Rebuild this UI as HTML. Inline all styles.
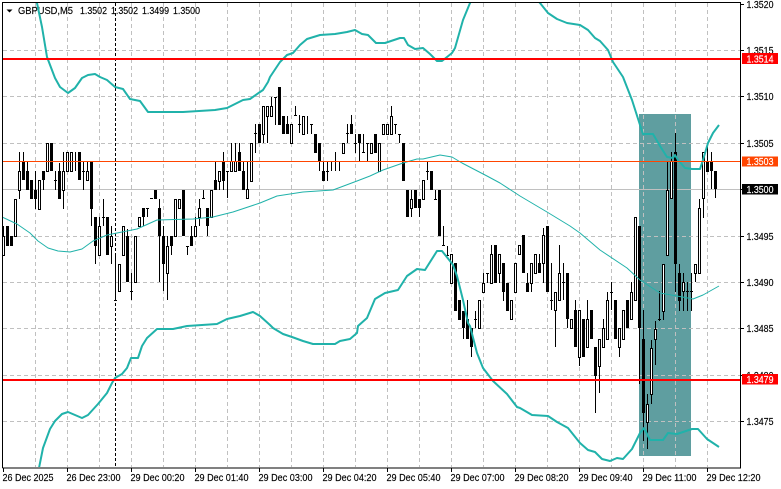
<!DOCTYPE html>
<html><head><meta charset="utf-8"><style>
html,body{margin:0;padding:0;background:#fff;width:781px;height:489px;overflow:hidden}
svg{display:block}
text{font-family:"Liberation Sans",sans-serif;font-size:10.5px;fill:#000;stroke:#000;stroke-width:.15px}
</style></head><body>
<svg width="781" height="489" viewBox="0 0 781 489" xmlns="http://www.w3.org/2000/svg">
<defs><clipPath id="c"><rect x="3" y="3" width="737" height="464"/></clipPath></defs>
<rect width="781" height="489" fill="#fff"/>
<rect x="639" y="114" width="52" height="342" fill="#5f9ea0"/>
<g stroke="#c0c0c0" stroke-width="1" stroke-dasharray="4 3" fill="none">
<path d="M3 50.5H740M3 96.5H740M3 143.5H740M3 236.5H740M3 282.5H740M3 328.5H740M3 375.5H740M3 421.5H740"/>
<path d="M35.5 3V467M67.5 3V467M99.5 3V467M131.5 3V467M163.5 3V467M195.5 3V467M227.5 3V467M259.5 3V467M291.5 3V467M323.5 3V467M355.5 3V467M387.5 3V467M419.5 3V467M451.5 3V467M483.5 3V467M515.5 3V467M547.5 3V467M579.5 3V467M611.5 3V467M643.5 3V467M675.5 3V467M707.5 3V467"/>
</g>
<path d="M3 189.5H740" stroke="#c0c0c0" stroke-width="1"/>
<path d="M6.5 9.5h6l-3 3z" fill="#000"/>
<text x="18" y="14" textLength="55" lengthAdjust="spacingAndGlyphs">GBPUSD,M5</text>
<text x="80" y="14" textLength="27" lengthAdjust="spacingAndGlyphs">1.3502</text>
<text x="111" y="14" textLength="27" lengthAdjust="spacingAndGlyphs">1.3502</text>
<text x="142" y="14" textLength="27" lengthAdjust="spacingAndGlyphs">1.3499</text>
<text x="173" y="14" textLength="27" lengthAdjust="spacingAndGlyphs">1.3500</text>
<!-- wicks -->
<path fill="none" stroke="#000" stroke-width="1" d="M3.5 226V255M7.5 226V246M19.5 152V199M23.5 152V180M27.5 161V190M35.5 171V209M43.5 171V190M55.5 171V190M54 180.5h3M59.5 163V199M63.5 152V209M75.5 152V171M74 161.5h3M83.5 161V190M82 171.5h3M87.5 161V180M91.5 161V226M95.5 217V264M99.5 217V255M103.5 199V226M102 217.5h3M111.5 226V264M115.5 253V300M114 300.5h3M127.5 229V282M131.5 273V300M130 291.5h3M143.5 208V226M147.5 208V217M146 208.5h3M150 198.5h3M159.5 199V282M163.5 226V291M167.5 236V300M171.5 236V255M187.5 246V255M186 246.5h3M191.5 226V246M195.5 217V236M199.5 199V226M203.5 190V198M202 198.5h3M207.5 208V236M215.5 161V190M219.5 171V190M223.5 152V190M227.5 171V198M226 171.5h3M231.5 143V171M235.5 143V171M239.5 143V171M243.5 161V190M247.5 161V198M255.5 124V153M254 133.5h3M259.5 124V143M263.5 106V143M267.5 106V143M271.5 97V116M275.5 97V125M274 97.5h3M283.5 116V134M287.5 116V134M295.5 106V115M294 115.5h3M298 124.5h3M299.5 115V133M307.5 116V134M311.5 124V134M310 124.5h3M319.5 143V171M323.5 161V181M327.5 161V181M326 171.5h3M331.5 161V171M330 161.5h3M335.5 152V171M334 161.5h3M339.5 161V171M338 161.5h3M347.5 124V143M346 133.5h3M351.5 115V134M355.5 134V153M354 143.5h3M359.5 134V161M363.5 134V152M362 152.5h3M367.5 143V161M366 143.5h3M391.5 106V134M395.5 124V134M394 124.5h3M399.5 134V143M398 134.5h3M411.5 190V217M419.5 199V217M427.5 161V180M426 171.5h3M435.5 190V199M434 199.5h3M443.5 226V245M442 245.5h3M447.5 246V255M446 255.5h3M463.5 311V339M467.5 300V339M471.5 328V357M475.5 311V328M474 319.5h3M483.5 273V292M487.5 273V283M486 273.5h3M491.5 245V283M499.5 254V283M503.5 263V301M527.5 273V292M531.5 263V292M539.5 254V273M543.5 228V283M551.5 263V310M550 300.5h3M555.5 292V347M559.5 245V300M563.5 263V300M562 282.5h3M567.5 273V328M575.5 300V347M579.5 310V366M587.5 300V347M595.5 347V413M599.5 339V393M603.5 319V347M607.5 292V339M611.5 282V310M610 292.5h3M619.5 328V357M631.5 282V319M639.5 226V384M643.5 310V441M647.5 394V449M651.5 340V404M655.5 321V365M659.5 291V321M658 319.5h3M663.5 264V320M667.5 161V255M671.5 152V198M675.5 133V292M679.5 264V311M683.5 273V311M687.5 282V311M686 291.5h3M691.5 273V311M690 291.5h3M695.5 264V282M699.5 199V273M703.5 152V218M707.5 143V172M711.5 152V189M715.5 171V198"/>
<!-- black bodies -->
<path fill="none" stroke="#000" stroke-width="3" d="M7.5 226V246M11.5 236V246M23.5 161V180M27.5 171V190M31.5 180V199M35.5 190V199M43.5 171V180M51.5 143V171M59.5 171V199M79.5 152V180M91.5 161V209M95.5 217V246M107.5 217V255M127.5 236V282M143.5 208V217M155.5 190V199M159.5 208V236M163.5 236V264M171.5 236V246M183.5 190V236M191.5 236V246M207.5 208V226M215.5 180V190M223.5 161V181M239.5 152V171M243.5 171V190M259.5 124V143M279.5 87V125M283.5 116V134M287.5 124V134M315.5 134V153M319.5 143V161M323.5 171V181M351.5 124V134M359.5 134V143M375.5 134V153M403.5 143V181M407.5 190V217M415.5 190V208M419.5 199V208M431.5 171V190M439.5 190V236M455.5 263V311M459.5 300V320M463.5 311V328M467.5 319V339M471.5 328V347M495.5 245V283M503.5 263V292M507.5 283V311M523.5 235V273M527.5 283V292M539.5 263V273M547.5 226V292M567.5 273V319M575.5 310V347M583.5 319V357M591.5 310V339M595.5 347V376M615.5 300V339M627.5 300V328M639.5 226V328M643.5 339V413M675.5 152V264M679.5 273V301M707.5 161V172M711.5 161V171M715.5 171V189"/>
<!-- white bodies -->
<path fill="#fff" stroke="#000" stroke-width="1" d="M2.5 236.5h2v19h-2zM14.5 199.5h2v37h-2zM18.5 171.5h2v19h-2zM38.5 180.5h2v29h-2zM46.5 143.5h2v28h-2zM62.5 171.5h2v19h-2zM66.5 152.5h2v19h-2zM70.5 152.5h2v19h-2zM86.5 171.5h2v9h-2zM98.5 226.5h2v29h-2zM110.5 236.5h2v10h-2zM118.5 264.5h2v27h-2zM122.5 226.5h2v29h-2zM134.5 236.5h2v46h-2zM138.5 217.5h2v9h-2zM166.5 246.5h2v27h-2zM174.5 199.5h2v37h-2zM178.5 199.5h2v9h-2zM194.5 226.5h2v10h-2zM198.5 208.5h2v9h-2zM210.5 190.5h2v27h-2zM218.5 171.5h2v10h-2zM230.5 161.5h2v10h-2zM234.5 161.5h2v10h-2zM246.5 189.5h2v9h-2zM250.5 143.5h2v38h-2zM262.5 106.5h2v28h-2zM266.5 106.5h2v10h-2zM270.5 106.5h2v10h-2zM290.5 124.5h2v19h-2zM302.5 116.5h2v18h-2zM342.5 143.5h2v10h-2zM370.5 143.5h2v10h-2zM378.5 143.5h2v28h-2zM382.5 124.5h2v10h-2zM386.5 124.5h2v10h-2zM390.5 116.5h2v18h-2zM410.5 199.5h2v9h-2zM422.5 180.5h2v19h-2zM450.5 254.5h2v29h-2zM478.5 300.5h2v28h-2zM482.5 283.5h2v9h-2zM490.5 254.5h2v29h-2zM498.5 254.5h2v19h-2zM510.5 300.5h2v19h-2zM514.5 263.5h2v29h-2zM518.5 245.5h2v9h-2zM530.5 263.5h2v20h-2zM534.5 254.5h2v19h-2zM542.5 235.5h2v28h-2zM554.5 292.5h2v18h-2zM558.5 273.5h2v27h-2zM570.5 319.5h2v9h-2zM578.5 310.5h2v47h-2zM586.5 319.5h2v28h-2zM598.5 339.5h2v27h-2zM602.5 328.5h2v19h-2zM606.5 300.5h2v39h-2zM618.5 328.5h2v19h-2zM622.5 310.5h2v29h-2zM630.5 292.5h2v27h-2zM634.5 217.5h2v83h-2zM646.5 404.5h2v18h-2zM650.5 348.5h2v46h-2zM654.5 329.5h2v10h-2zM662.5 264.5h2v47h-2zM666.5 190.5h2v65h-2zM670.5 161.5h2v37h-2zM682.5 282.5h2v9h-2zM694.5 264.5h2v9h-2zM698.5 208.5h2v65h-2zM702.5 152.5h2v46h-2z"/>
<path d="M115.5 3V468" stroke="#000" stroke-width="1" stroke-dasharray="3 2" fill="none"/>
<!-- bands -->
<g clip-path="url(#c)" fill="none" stroke="#20b2aa" stroke-linejoin="round">
<path stroke-width="2" d="M36 0L37 3 42 27 47 57 55 78 60 87 68 93 75 88 82 78 88 75 95 74 100 77 107 80 115 87 123 89 130 99 140 101 148 112 183 112 215 110 227 108 243 100 250 99 260 92 263 90 268 82 270 77 280 62 287 55 293 53 300 45 307 39 320 35 335 34 347 32 355 30 362 34 368 35 376 43 385 43 400 38 404 38 408 45 415 49 423 48 430 54 437 61 442 61 452 53 455 48 463 20 470 3 472 0"/>
<path stroke-width="2" d="M537 0L540 3 548 13 557 19 567 23 580 25 588 30 595 38 600 41 608 50 613 62 623 77 632 100 640 125 643 134 653 134 660 146 667 157 673 158 675 155 678 160 685 168 692 169 700 169 703 160 708 143 713 133 719 125"/>
<path stroke-width="1" d="M0 216L17 224 30 233 38 241 48 248 58 251 70 252 82 249 93 241 107 235 127 231 137 229 157 220 193 219 213 217 233 212 260 203 277 196 303 192 333 190 357 181 370 176 383 170 403 163 417 159 423 159 440 155 452 157 462 163 487 176 500 183 520 196 547 212 570 226 580 233 600 250 627 268 640 280 660 293 677 296 693 299 703 295 719 286"/>
<path stroke-width="2" d="M39 468L43 448 50 429 55 421 62 414 68 412 75 415 82 418 88 415 98 404 107 393 112 383 115 378 122 374 127 368 131 358 138 358 142 346 147 338 157 329 173 329 187 326 217 324 227 319 240 316 253 312 260 316 270 325 273 328 283 334 292 337 303 341 313 344 335 344 340 341 350 339 357 333 358 326 367 318 375 299 385 293 398 290 407 276 417 269 425 270 437 251 442 251 450 261 453 265 457 276 463 300 468 323 470 326 477 353 483 368 493 381 507 394 517 407 520 408 532 415 548 416 557 422 568 428 580 443 588 450 595 452 602 459 610 461 617 458 623 459 632 449 640 433 644 428 650 440 663 440 668 433 677 434 692 429 698 429 707 439 719 447"/>
</g>
<!-- level lines -->
<path d="M3 59H741M3 380H741" stroke="#ff0000" stroke-width="2"/>
<path d="M3 161.500H741" stroke="#ff4500" stroke-width="1"/>
<!-- frame -->
<path d="M2.500 468V2.500H740.500V468H2.500" fill="none" stroke="#000" stroke-width="1"/>
<path stroke="#000" stroke-width="1" d="M740 4.500h4M740 50.500h4M740 96.500h4M740 143.500h4M740 189.500h4M740 236.500h4M740 282.500h4M740 328.500h4M740 375.500h4M740 421.500h4M3.500 468v4M67.500 468v4M131.500 468v4M195.500 468v4M259.500 468v4M323.500 468v4M387.500 468v4M451.500 468v4M515.500 468v4M579.500 468v4M643.500 468v4M707.500 468v4"/>
<!-- price axis -->
<g>
<text x="746.500" y="8" textLength="27" lengthAdjust="spacingAndGlyphs">1.3520</text>
<text x="746.500" y="54" textLength="27" lengthAdjust="spacingAndGlyphs">1.3515</text>
<text x="746.500" y="100" textLength="27" lengthAdjust="spacingAndGlyphs">1.3510</text>
<text x="746.500" y="147" textLength="27" lengthAdjust="spacingAndGlyphs">1.3505</text>
<text x="746.500" y="240" textLength="27" lengthAdjust="spacingAndGlyphs">1.3495</text>
<text x="746.500" y="286" textLength="27" lengthAdjust="spacingAndGlyphs">1.3490</text>
<text x="746.500" y="332" textLength="27" lengthAdjust="spacingAndGlyphs">1.3485</text>
<text x="746.500" y="379" textLength="27" lengthAdjust="spacingAndGlyphs">1.3480</text>
<text x="746.500" y="425" textLength="27" lengthAdjust="spacingAndGlyphs">1.3475</text>
</g>
<rect x="742" y="53" width="36" height="11" fill="#ff0000"/>
<text x="746.500" y="62.500" textLength="27" lengthAdjust="spacingAndGlyphs" style="fill:#fff;stroke:#fff">1.3514</text>
<rect x="742" y="156.500" width="36" height="10" fill="#ff4500"/>
<text x="746.500" y="165" textLength="27" lengthAdjust="spacingAndGlyphs" style="fill:#fff;stroke:#fff">1.3503</text>
<rect x="742" y="184" width="36" height="10.500" fill="#000"/>
<text x="746.500" y="193" textLength="27" lengthAdjust="spacingAndGlyphs" style="fill:#fff;stroke:#fff">1.3500</text>
<rect x="742" y="374" width="36" height="10.500" fill="#ff0000"/>
<text x="746.500" y="383" textLength="27" lengthAdjust="spacingAndGlyphs" style="fill:#fff;stroke:#fff">1.3479</text>
<!-- time axis -->
<g>
<text x="2.500" y="481" textLength="51" lengthAdjust="spacingAndGlyphs">26 Dec 2025</text>
<text x="66.500" y="481" textLength="54" lengthAdjust="spacingAndGlyphs">26 Dec 23:00</text>
<text x="130.500" y="481" textLength="54" lengthAdjust="spacingAndGlyphs">29 Dec 00:20</text>
<text x="194.500" y="481" textLength="54" lengthAdjust="spacingAndGlyphs">29 Dec 01:40</text>
<text x="258.500" y="481" textLength="54" lengthAdjust="spacingAndGlyphs">29 Dec 03:00</text>
<text x="322.500" y="481" textLength="54" lengthAdjust="spacingAndGlyphs">29 Dec 04:20</text>
<text x="386.500" y="481" textLength="54" lengthAdjust="spacingAndGlyphs">29 Dec 05:40</text>
<text x="450.500" y="481" textLength="54" lengthAdjust="spacingAndGlyphs">29 Dec 07:00</text>
<text x="514.500" y="481" textLength="54" lengthAdjust="spacingAndGlyphs">29 Dec 08:20</text>
<text x="578.500" y="481" textLength="54" lengthAdjust="spacingAndGlyphs">29 Dec 09:40</text>
<text x="642.500" y="481" textLength="54" lengthAdjust="spacingAndGlyphs">29 Dec 11:00</text>
<text x="706.500" y="481" textLength="54" lengthAdjust="spacingAndGlyphs">29 Dec 12:20</text>
</g>
</svg>
</body></html>
